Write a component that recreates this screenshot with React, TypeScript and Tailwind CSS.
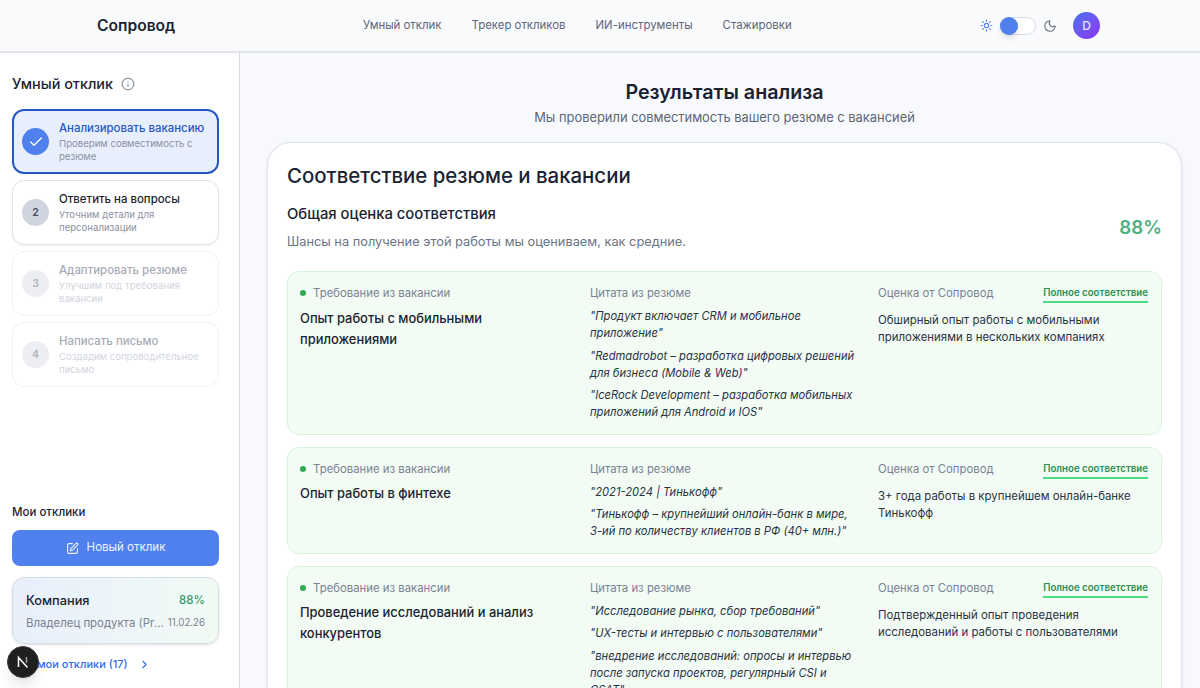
import React from 'react';
import { Check, ChevronRight, Info, Moon, SquarePen, Sun } from 'lucide-react';

const NAV_ITEMS = ['Умный отклик', 'Трекер откликов', 'ИИ-инструменты', 'Стажировки'];

const STEPS = [
  { num: '1', title: 'Анализировать вакансию', text: 'Проверим совместимость с резюме', state: 'done' },
  { num: '2', title: 'Ответить на вопросы', text: 'Уточним детали для персонализации', state: 'next' },
  { num: '3', title: 'Адаптировать резюме', text: 'Улучшим под требования вакансии', state: 'off' },
  { num: '4', title: 'Написать письмо', text: 'Создадим сопроводительное письмо', state: 'off' },
];

const ROWS = [
  {
    title: 'Опыт работы с мобильными приложениями',
    quotes: [
      '"Продукт включает CRM и мобильное приложение"',
      '"Redmadrobot – разработка цифровых решений для бизнеса (Mobile & Web)"',
      '"IceRock Development – разработка мобильных приложений для Android и IOS"',
    ],
    note: 'Обширный опыт работы с мобильными приложениями в нескольких компаниях',
  },
  {
    title: 'Опыт работы в финтехе',
    quotes: [
      '"2021-2024 | Тинькофф"',
      '"Тинькофф – крупнейший онлайн-банк в мире, 3-ий по количеству клиентов в РФ (40+ млн.)"',
    ],
    note: '3+ года работы в крупнейшем онлайн-банке Тинькофф',
  },
  {
    title: 'Проведение исследований и анализ конкурентов',
    quotes: [
      '"Исследование рынка, сбор требований"',
      '"UX-тесты и интервью с пользователями"',
      '"внедрение исследований: опросы и интервью после запуска проектов, регулярный CSI и CSAT"',
    ],
    note: 'Подтвержденный опыт проведения исследований и работы с пользователями',
  },
];

const Header: React.FC = () => (
  <header className="h-[53px] shrink-0 bg-[#f9fafc] border-b-2 border-[#e2e5ec] flex items-center relative">
    <div className="w-[370px] pl-[97px] text-[15.6px] font-semibold text-[#1b2333]">Сопровод</div>
    <nav className="flex gap-[30px] ml-[-7px] text-[11.4px] text-[#5d6679]">
      {NAV_ITEMS.map((item) => (
        <span key={item}>{item}</span>
      ))}
    </nav>
    <div className="ml-auto flex items-center pr-[100px]">
      <Sun size={13} className="text-[#4f80ee]" />
      <div className="ml-[7px] w-[36px] h-[18px] rounded-full bg-white border border-[#d5dae5] relative">
        <div className="absolute left-[-1px] top-[-1px] w-[18px] h-[18px] rounded-full bg-[#4f80ee] shadow-md" />
      </div>
      <Moon size={14} className="ml-[7px] text-[#6b7280]" />
      <div className="ml-[16px] w-[27px] h-[27px] rounded-full bg-gradient-to-br from-[#3f6ff0] to-[#8a2ff0] flex items-center justify-center text-[#e6e6ff] text-[12px] font-medium">
        D
      </div>
    </div>
  </header>
);

const StepCard: React.FC<(typeof STEPS)[number]> = ({ num, title, text, state }) => {
  const active = state === 'done';
  const off = state === 'off';
  return (
    <div
      className={
        active
          ? 'h-[65px] rounded-xl border-2 border-[#2457c5] bg-[#e8effc] flex items-center pl-[8px]'
          : off
            ? 'h-[65px] rounded-xl border border-[#eef0f4] bg-white flex items-center pl-[9px]'
            : 'h-[65px] rounded-xl border border-[#dfe3ea] bg-white flex items-center pl-[9px] shadow-xs'
      }
    >
      {active ? (
        <div className="w-[27px] h-[27px] shrink-0 rounded-full bg-[#4f80ee] flex items-center justify-center">
          <Check size={16} className="text-white" />
        </div>
      ) : (
        <div
          className={
            off
              ? 'w-[27px] h-[27px] shrink-0 rounded-full bg-[#eceef3] flex items-center justify-center text-[10.5px] font-semibold text-[#b0b5c0]'
              : 'w-[27px] h-[27px] shrink-0 rounded-full bg-[#cfd5df] flex items-center justify-center text-[10.5px] font-semibold text-[#475063]'
          }
        >
          {num}
        </div>
      )}
      <div className="ml-[10px] pr-2 min-w-0">
        <div
          className={
            active
              ? 'text-[11.4px] leading-[16px] font-medium text-[#2457c5]'
              : off
                ? 'text-[11.4px] leading-[16px] font-medium text-[#a6abb5]'
                : 'text-[11.4px] leading-[16px] font-medium text-[#1b2333]'
          }
        >
          {title}
        </div>
        <div className={off ? 'mt-[1px] text-[9.6px] leading-[13px] text-[#d2d6de]' : 'mt-[1px] text-[9.6px] leading-[13px] text-[#8a92a3]'}>
          {text}
        </div>
      </div>
    </div>
  );
};

const Sidebar: React.FC = () => (
  <aside className="w-[240px] shrink-0 bg-white border-r border-[#d8dce6] px-3 pt-[22px] pb-[15px] flex flex-col relative">
    <div className="flex items-center gap-2 h-[18px] text-[14.4px] font-medium text-[#1b2333]">
      Умный отклик
      <Info size={14} className="text-[#8a92a3]" />
    </div>
    <div className="mt-[16px] flex flex-col gap-[6px] w-[207px]">
      {STEPS.map((step) => (
        <StepCard key={step.num} {...step} />
      ))}
    </div>
    <div className="mt-auto w-[207px]">
      <div className="text-[11.5px] leading-[16px] font-medium text-[#1b2333] translate-y-[1px]">Мои отклики</div>
      <button className="mt-[11px] w-full h-[36px] rounded-lg bg-[#4f80ee] text-[#eef3ff] text-[11.5px] flex items-center justify-center gap-2">
        <SquarePen size={13} />
        Новый отклик
      </button>
      <div className="mt-[11px] h-[67px] rounded-xl border border-[#d8dce6] bg-gradient-to-r from-[#e8effc] to-[#f1fbf4] shadow-sm px-[13px] pt-[13px]">
        <div className="flex justify-between items-center">
          <span className="text-[12.8px] font-medium text-[#1b2333]">Компания</span>
          <span className="text-[11.5px] font-medium text-[#3d9a6b]">88%</span>
        </div>
        <div className="mt-[5px] flex justify-between items-center text-[#7a8292]">
          <span className="text-[11.4px] truncate w-[139px]">Владелец продукта (Product Manager)</span>
          <span className="text-[9.7px]">11.02.26</span>
        </div>
      </div>
      <div className="mt-[11px] pl-[2px] flex items-center gap-[10px] text-[11px] leading-[18px] font-medium text-[#2f6bf0]">
        Все мои отклики (17)
        <ChevronRight size={13} />
      </div>
    </div>
    <div className="absolute left-[7px] bottom-[10px] w-[32px] h-[32px] rounded-full bg-[#1f1f1f] border border-[#3a3a3a] shadow-lg flex items-center justify-center">
      <svg width="14" height="14" viewBox="0 0 14 14" fill="none">
        <path d="M2.5 12V2.5L11.5 12.5" stroke="white" strokeWidth="1.5" />
        <path d="M10.5 2V8" stroke="#999" strokeWidth="1.5" />
      </svg>
    </div>
  </aside>
);

const MatchRow: React.FC<(typeof ROWS)[number]> = ({ title, quotes, note }) => (
  <div className="rounded-xl border border-[#d3f5dc] bg-[#f2fcf5] pl-[12px] pr-[13px] pt-[13px] pb-[13px] grid grid-cols-[290px_288px_1fr]">
    <div className="pr-6">
      <div className="flex items-center gap-[7px] text-[11.35px] leading-[16px] text-[#7a8292]">
        <span className="w-[6px] h-[6px] rounded-full bg-[#34a853]" />
        Требование из вакансии
      </div>
      <div className="mt-[6.5px] text-[12.9px] leading-[21px] font-medium text-[#1b2333]">{title}</div>
    </div>
    <div className="pr-5">
      <div className="text-[11.35px] leading-[16px] text-[#7a8292]">Цитата из резюме</div>
      <div className="mt-[7px] flex flex-col gap-[5.5px]">
        {quotes.map((quote) => (
          <p key={quote} className="text-[11.2px] leading-[17px] italic text-[#2a3344]">
            {quote}
          </p>
        ))}
      </div>
    </div>
    <div>
      <div className="flex justify-between items-start text-[11.35px] leading-[16px]">
        <span className="text-[#7a8292]">Оценка от Сопровод</span>
        <span className="text-[9.7px] font-semibold text-[#2f8f4e] border-b-2 border-[#4ade80]">Полное соответствие</span>
      </div>
      <p className="mt-[9px] text-[11.45px] leading-[17px] text-[#2a3344]">{note}</p>
    </div>
  </div>
);

const App: React.FC = () => (
  <div className="h-screen flex flex-col overflow-hidden font-['Inter',sans-serif] bg-[#f8f9fc]">
    <Header />
    <div className="flex flex-1 min-h-0">
      <Sidebar />
      <main className="flex-1 min-w-0 overflow-hidden pl-[27px] pr-[18px] pt-[26px]">
        <h1 className="text-center text-[19.7px] leading-[26px] font-semibold text-[#1b2333]">Результаты анализа</h1>
        <p className="mt-[3px] text-center text-[12.9px] leading-[20px] text-[#5d6679]">
          Мы проверили совместимость вашего резюме с вакансией
        </p>
        <section className="mt-[14px] rounded-3xl border border-[#dfe3ec] bg-white px-[19px] pt-[20px] shadow-sm">
          <h2 className="text-[20.4px] leading-[26px] font-medium text-[#1b2333]">Соответствие резюме и вакансии</h2>
          <div className="mt-[15px] flex items-center justify-between">
            <div>
              <div className="text-[14.8px] leading-[20px] font-medium text-[#1b2333]">Общая оценка соответствия</div>
              <div className="mt-[8px] text-[12.8px] leading-[20px] text-[#6b7487]">
                Шансы на получение этой работы мы оцениваем, как средние.
              </div>
            </div>
            <div className="text-[18.7px] font-semibold text-[#4cb07f]">88%</div>
          </div>
          <div className="mt-[19px] flex flex-col gap-[11.5px]">
            {ROWS.map((row) => (
              <MatchRow key={row.title} {...row} />
            ))}
          </div>
        </section>
      </main>
    </div>
  </div>
);

export default App;
